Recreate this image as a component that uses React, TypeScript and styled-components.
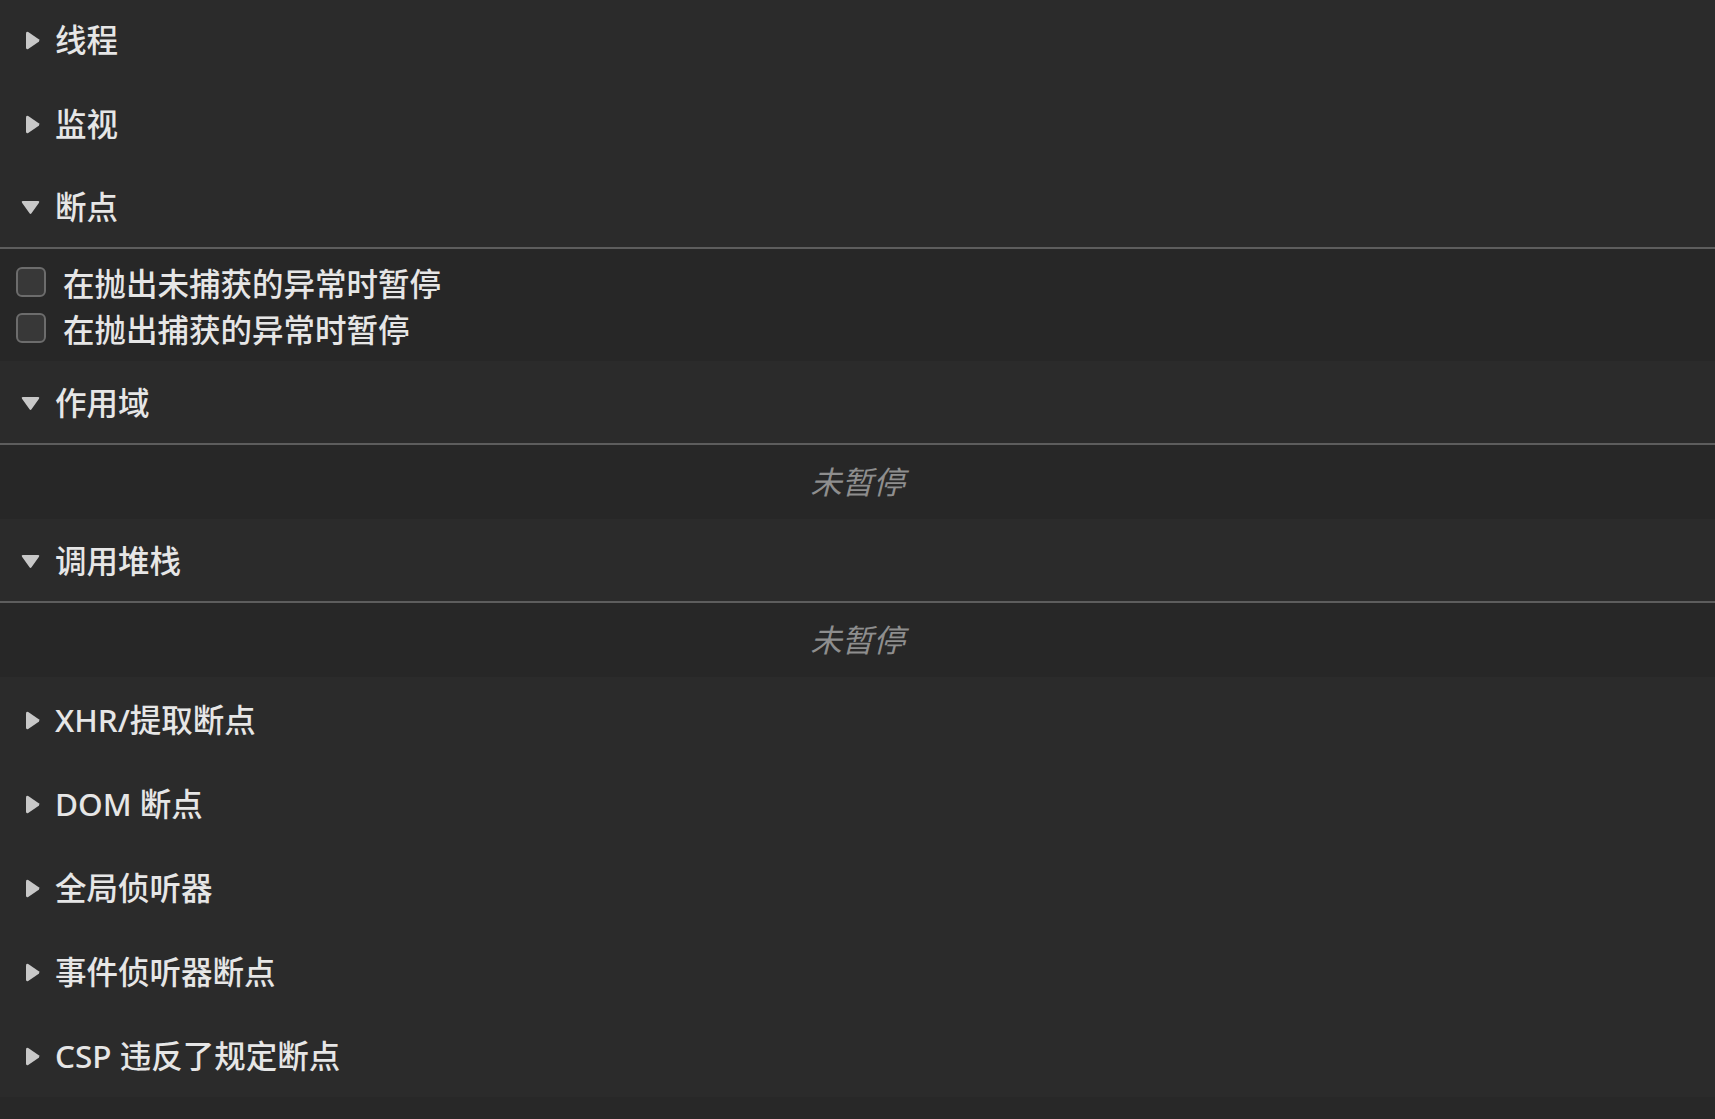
import React from 'react'
import styled, { createGlobalStyle } from 'styled-components'

const GlobalStyle = createGlobalStyle`
  html, body {
    margin: 0;
    padding: 0;
    background: #282828;
    overflow: hidden;
  }
  body {
    font-family: "Noto Sans", "Noto Sans CJK SC", sans-serif;
  }
`

const Panel = styled.div`
  display: flex;
  flex-direction: column;
  width: 100%;
  height: 1119px;
  margin-top: -3px;
  background: #282828;
`

const Header = styled.div<{ $open?: boolean }>`
  box-sizing: border-box;
  display: flex;
  align-items: center;
  gap: 15px;
  height: 84px;
  flex-shrink: 0;
  padding-top: 2px;
  background: #2b2b2b;
  border-bottom: ${p => (p.$open ? '2px solid #5d5d5d' : 'none')};
`

const ArrowBox = styled.span`
  display: flex;
  justify-content: flex-end;
  align-items: center;
  width: 40px;
  flex-shrink: 0;
`

const Title = styled.span`
  font-size: 31.5px;
  font-weight: 500;
  line-height: 40px;
  color: #e6e6e6;
  white-space: nowrap;
`

const CheckboxList = styled.div`
  display: flex;
  flex-direction: column;
  padding: 10px 0;
  background: #272727;
`

const CheckRow = styled.label`
  display: flex;
  align-items: center;
  gap: 17px;
  height: 46px;
  padding-left: 16px;
`

const Box = styled.span`
  box-sizing: border-box;
  width: 30px;
  height: 30px;
  border: 2.5px solid #6c6c6c;
  border-radius: 6px;
  background: #383838;
  flex-shrink: 0;
`

const CheckText = styled.span`
  font-size: 31.5px;
  font-weight: 500;
  color: #e6e6e6;
  white-space: nowrap;
`

const Empty = styled.div`
  display: flex;
  align-items: center;
  justify-content: center;
  height: 74px;
  flex-shrink: 0;
  padding-bottom: 4px;
  box-sizing: border-box;
  background: #272727;
  font-size: 31.5px;
  font-style: italic;
  color: #8e8e8e;
`

const Arrow = ({ open }: { open?: boolean }) =>
  open ? (
    <svg width="19" height="15" viewBox="0 0 19 15">
      <path d="M1.8 1 H17.2 Q19 1 18 2.8 L10.5 13.2 Q9.5 14.6 8.5 13.2 L1 2.8 Q0 1 1.8 1Z" fill="#c8c8c8" />
    </svg>
  ) : (
    <svg width="14" height="19" viewBox="0 0 14 19">
      <path d="M2.2 1 L12.8 8.2 Q14 9.5 12.8 10.8 L2.2 18 Q0 19 0 16.6 V2.4 Q0 0 2.2 1Z" fill="#c8c8c8" />
    </svg>
  )

const Section = ({ title, open }: { title: string; open?: boolean }) => (
  <Header $open={open}>
    <ArrowBox>
      <Arrow open={open} />
    </ArrowBox>
    <Title>{title}</Title>
  </Header>
)

export default function App() {
  return (
    <>
      <GlobalStyle />
      <Panel>
        <Section title="线程" />
        <Section title="监视" />
        <Section title="断点" open />
        <CheckboxList>
          <CheckRow>
            <Box />
            <CheckText>在抛出未捕获的异常时暂停</CheckText>
          </CheckRow>
          <CheckRow>
            <Box />
            <CheckText>在抛出捕获的异常时暂停</CheckText>
          </CheckRow>
        </CheckboxList>
        <Section title="作用域" open />
        <Empty>未暂停</Empty>
        <Section title="调用堆栈" open />
        <Empty>未暂停</Empty>
        <Section title="XHR/提取断点" />
        <Section title="DOM 断点" />
        <Section title="全局侦听器" />
        <Section title="事件侦听器断点" />
        <Section title="CSP 违反了规定断点" />
      </Panel>
    </>
  )
}
